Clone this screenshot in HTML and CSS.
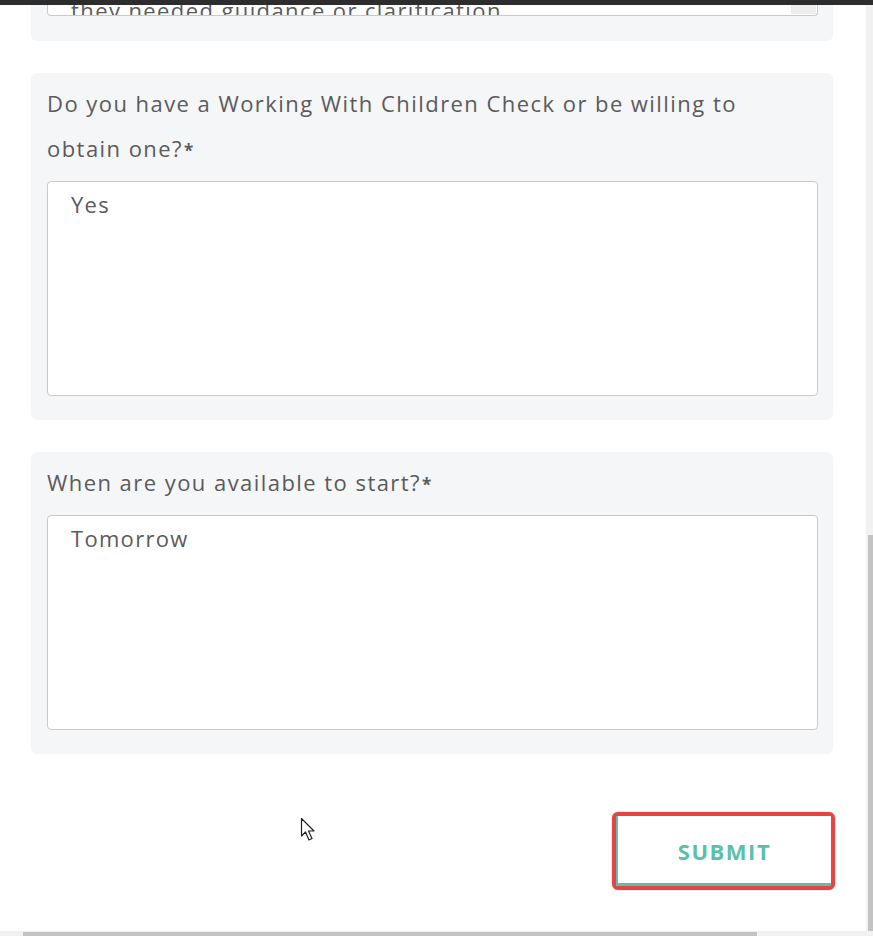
FILE: index.html
```html
<!DOCTYPE html>
<html lang="en">

<head>
    <meta charset="UTF-8">
    <meta name="viewport" content="width=device-width, initial-scale=1.0">
    <title>Application Form</title>
    <link rel="stylesheet" href="styles.css">
</head>

<body>
    <div class="window">
        <div class="topbar"></div>
        <div class="middle">
            <div class="content">
                <div class="card card-cut">
                    <div class="field-cut">
                        <span class="cut-text">they needed guidance or clarification</span>
                        <div class="mini-scroll"></div>
                    </div>
                </div>

                <div class="card">
                    <p class="label">Do you have a Working With Children Check or be willing to obtain one?<b>*</b></p>
                    <div class="field">Yes</div>
                </div>

                <div class="card">
                    <p class="label">When are you available to start?<b>*</b></p>
                    <div class="field">Tomorrow</div>
                </div>

                <div class="actions">
                    <div class="highlight">
                        <button class="submit">SUBMIT</button>
                    </div>
                </div>

                <svg class="cursor" width="17" height="26" viewBox="0 0 17 26">
                    <path d="M1.5 1.5 L1.5 19 L5.5 15 L9 23 L12 21.5 L8.5 14 L14 14 Z" fill="#fff" stroke="#222" stroke-width="1.2" stroke-linejoin="round" />
                </svg>
            </div>
            <div class="vscroll">
                <div class="vthumb"></div>
            </div>
        </div>
        <div class="hscroll">
            <div class="hthumb"></div>
        </div>
    </div>
</body>

</html>
```

FILE: styles.css
```css
* {
    margin: 0;
    padding: 0;
    box-sizing: border-box;
}

body {
    background-color: #fff;
    font-family: "Open Sans", "Liberation Sans", sans-serif;
    color: #5b5b5b;
}

.window {
    display: flex;
    flex-direction: column;
    width: 873px;
    height: 936px;
    overflow: hidden;
}

.topbar {
    height: 5px;
    background-color: #2d2d2d;
}

.middle {
    display: flex;
    flex: 1;
    min-height: 0;
}

.content {
    position: relative;
    flex: 1;
    display: flex;
    flex-direction: column;
    gap: 32px;
    padding-left: 31px;
    overflow: hidden;
}

.card {
    width: 802px;
    background-color: #f5f6f8;
    border-radius: 6px;
    padding: 8px 15px 24px 16px;
}

.card-cut {
    border-radius: 0 0 6px 6px;
    padding-top: 0;
    padding-bottom: 25px;
}

.field-cut {
    position: relative;
    height: 11px;
    background-color: #fff;
    border: 1px solid #c9c9c9;
    border-top: none;
    border-radius: 0 0 4px 4px;
    display: flex;
    align-items: flex-end;
    overflow: hidden;
    padding-left: 23px;
}

.cut-text {
    font-size: 22px;
    line-height: 22px;
    letter-spacing: 1.4px;
    margin-bottom: -6px;
    white-space: nowrap;
}

.mini-scroll {
    position: absolute;
    right: 1px;
    top: 0;
    width: 25px;
    height: 9px;
    background-color: #ededed;
}

.label {
    font-size: 22px;
    line-height: 45px;
    letter-spacing: 1.45px;
    padding-right: 40px;
}

.label b {
    font-weight: 700;
    font-size: 17px;
    letter-spacing: 0;
    margin-left: 1px;
}

.field {
    margin-top: 8px;
    height: 215px;
    background-color: #fff;
    border: 1px solid #c9c9c9;
    border-radius: 4px;
    padding: 9px 23px;
    font-size: 22px;
    line-height: 26px;
    letter-spacing: 1.3px;
}

.actions {
    display: flex;
    justify-content: flex-end;
    margin-top: 26px;
    padding-right: 31px;
}

.highlight {
    width: 223px;
    height: 78px;
    border: 4px solid #e84343;
    border-radius: 6px;
    box-shadow: 0 0 1px #444;
}

.submit {
    width: 100%;
    height: 100%;
    background-color: #fff;
    border: none;
    border-left: 2px solid #5cc0a9;
    border-bottom: 3px solid #5cc0a9;
    color: #5cc0a9;
    font-family: "Open Sans", "Liberation Sans", sans-serif;
    font-size: 22px;
    font-weight: 700;
    letter-spacing: 1.5px;
    padding-top: 2px;
}

.cursor {
    position: absolute;
    left: 300px;
    top: 812px;
}

.vscroll {
    width: 7px;
    background-color: #f1f1f1;
    padding-top: 530px;
    padding-left: 2px;
}

.vthumb {
    height: 100%;
    background-color: #c3c3c3;
}

.hscroll {
    height: 5px;
    background-color: #f1f1f1;
    padding-left: 23px;
    padding-top: 1px;
}

.hthumb {
    width: 734px;
    height: 100%;
    background-color: #c3c3c3;
}
```
